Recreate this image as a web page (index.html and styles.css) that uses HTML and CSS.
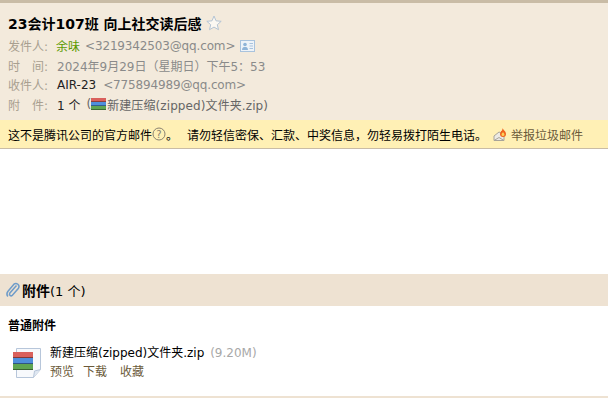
FILE: index.html
```html
<!DOCTYPE html>
<html lang="zh-CN">
<head>
  <meta charset="UTF-8" />
  <title>23会计107班 向上社交读后感</title>
  <link rel="stylesheet" href="styles.css">
</head>
<body>
  <div class="mail-head">
    <div class="mail-subject">
      <span>23会计107班 向上社交读后感</span>
      <svg class="star" width="16" height="16" viewBox="0 0 16 16"><path d="M8 1l2 4.800 5.200.5-3.900 3.400 1.200 5L8 12.100l-4.500 2.600 1.200-5L.8 6.300 6 5.800z" fill="#fbf8f2" stroke="#b4c4d4"/></svg>
    </div>
    <div class="mail-row">
      <span class="row-label">发件人:</span>
      <span class="sender">余味</span>
      <span class="addr email">&lt;3219342503@qq.com&gt;</span>
      <svg class="card" width="15" height="12" viewBox="0 0 15 12"><rect x="0.500" y="0.500" width="14" height="11" fill="#eef3f8" stroke="#a9c3dd"/><circle cx="5" cy="4.500" r="1.800" fill="#8fb4d8"/><path d="M2 10c0-2.500 1.500-3 3-3s3 .5 3 3z" fill="#8fb4d8"/><path d="M9.500 3.500h3.500M9.500 6h3.500M9.500 8.500h3.500" stroke="#a9c3dd"/></svg>
    </div>
    <div class="mail-row">
      <span class="row-label spaced">时<i></i>间:</span>
      <span class="addr">2024年9月29日（星期日）下午5：53</span>
    </div>
    <div class="mail-row">
      <span class="row-label">收件人:</span>
      <span class="receiver">AIR-23</span>
      <span class="addr email">&lt;775894989@qq.com&gt;</span>
    </div>
    <div class="mail-row">
      <span class="row-label spaced">附<i></i>件:</span>
      <span class="receiver count">1 个</span>
      <span class="attach-ref">(<svg class="zip-small" width="15" height="12" viewBox="0 0 15 12"><rect y="0" width="15" height="4" fill="#d9605c"/><rect y="4" width="15" height="4" fill="#4f8fdc"/><rect y="8" width="15" height="4" fill="#5fa552"/><path d="M0 3.500h15M0 7.500h15M0 11.500h15" stroke="#000" stroke-opacity=".35"/></svg><span class="ref-name">新建压缩(zipped)文件夹.zip)</span></span>
    </div>
  </div>

  <div class="notice">
    <span class="notice-a">这不是腾讯公司的官方邮件<svg class="help" width="14" height="14" viewBox="0 0 14 14"><circle cx="7" cy="7" r="6" fill="none" stroke="#8a8270"/><text x="7" y="10.500" text-anchor="middle" class="help-mark">?</text></svg>。</span>
    <span class="notice-b">请勿轻信密保、汇款、中奖信息，勿轻易拨打陌生电话。</span>
    <svg class="flame" width="15" height="15" viewBox="0 0 15 15"><path d="M1 9l5-4 5 2v6.500H1z" fill="#eceae4" stroke="#a8a49a"/><path d="M1 13.500l5-3 5 3" fill="none" stroke="#a8a49a"/><path d="M9.500 1c.5 2 3.500 3 3.500 6a3 3 0 0 1-6 0c0-1.500 1-1.500 1-3 1 .5 1.500-1.500 1.500-3z" fill="#f0641e"/><path d="M10 5c.5 1 1.500 1.500 1.500 2.500a1.500 1.500 0 0 1-3 0c0-1 1-1.500 1.500-2.500z" fill="#fbd25a"/></svg>
    <span class="report">举报垃圾邮件</span>
  </div>

  <div class="mail-body"></div>

  <div class="attach-bar">
    <svg class="clip" width="16" height="18" viewBox="0 0 16 18"><path d="M11.500 4.500l-6.800 7.800a1.700 1.700 0 0 0 2.500 2.200l6.300-7.300a3.100 3.100 0 0 0-4.600-4L2.800 10.500a4.300 4.300 0 0 0 0 5" fill="none" stroke="#6f9cc9" stroke-width="1.500"/></svg>
    <b>附件</b><span>(1 个)</span>
  </div>

  <div class="attach-list">
    <div class="attach-title">普通附件</div>
    <div class="attach-item">
      <svg class="zip-big" width="32" height="32" viewBox="0 0 32 32"><path d="M4.500 1.500h24v21l-7 8h-17z" fill="#f7f9fc" stroke="#b7c6da"/><path d="M21.500 30.500l1-6.500 6-1.500" fill="#dfe7f1" stroke="#b7c6da"/><rect x="1" y="5" width="20" height="6" fill="#d9605c"/><rect x="1" y="11" width="20" height="6" fill="#4f8fdc"/><rect x="1" y="17" width="20" height="6" fill="#5fa552"/><path d="M1 10.500h20M1 16.500h20M1 22.500h20" stroke="#000" stroke-opacity=".4"/></svg>
      <div class="attach-info">
        <div class="attach-name">新建压缩(zipped)文件夹.zip <span class="attach-size">(9.20M)</span></div>
        <div class="attach-links"><span>预览</span><span>下载</span><span>收藏</span></div>
      </div>
    </div>
  </div>
  <div class="bottom-rule"></div>
</body>
</html>
```

FILE: styles.css
```css
body {
  margin: 0;
  background: #fff;
  font-family: "DejaVu Sans", "Noto Sans CJK SC", sans-serif;
  font-size: 12px;
  color: #000;
  overflow: hidden;
}
.mail-head {
  background: #f3eadc;
  border-top: 3px solid #c9bca6;
  height: 120px;
  padding: 0 8px;
  box-sizing: border-box;
}
.mail-subject {
  display: flex;
  align-items: center;
  gap: 4px;
  padding-top: 6px;
  height: 27px;
  font-size: 14px;
  font-weight: bold;
}
.mail-row {
  display: flex;
  align-items: center;
  height: 19.500px;
  color: #a09a8e;
}
.row-label {
  width: 49px;
  color: #a89f90;
}
.spaced i {
  display: inline-block;
  width: 12px;
}
.sender { color: #5c9a00; margin: 0 5px 0 -1px; }
.addr { color: #8a8a8a; }
.email { letter-spacing: -0.150px; }
.receiver { color: #222; margin-right: 7px; }
.count { margin-right: 6px; }
.attach-ref { color: #666; display: flex; align-items: center; }
.zip-small { margin: 0 1px 0 0; }
.ref-name { letter-spacing: 0.100px; }
.card { margin-left: 5px; }
.notice {
  display: flex;
  align-items: center;
  height: 28px;
  padding-left: 8px;
  background: #fff0b5;
  border-bottom: 1px solid #c9bca6;
}
.notice-a { display: flex; align-items: center; }
.help-mark { font-size: 10px; fill: #8a8270; }
.notice-b { margin-left: 9px; }
.flame { margin-left: 6px; }
.report { margin-left: 3px; color: #6b5a3a; }
.mail-body { height: 125px; }
.attach-bar {
  display: flex;
  align-items: center;
  height: 32px;
  padding-left: 5px;
  background: #eee2d2;
  font-size: 13px;
}
.attach-bar b { margin-left: 1px; font-size: 14px; }
.attach-list { height: 90px; padding: 12px 8px 0; box-sizing: border-box; }
.attach-title { font-weight: bold; height: 20px; line-height: 16px; }
.attach-item { display: flex; gap: 6px; padding: 0 0 0 4px; margin-top: 2px; }
.zip-big { margin-top: 7px; }
.attach-info { padding-top: 4px; }
.attach-name { line-height: 18px; }
.attach-size { color: #a8a8a8; margin-left: 2px; }
.attach-links { display: flex; gap: 9px; color: #6b5a3a; }
.attach-links span:last-child { margin-left: 4px; }
.bottom-rule { height: 2px; background: #eee2d2; }
```
